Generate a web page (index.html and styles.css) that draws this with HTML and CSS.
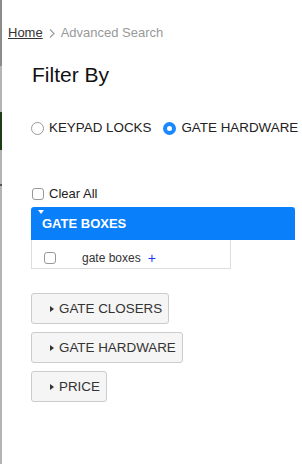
FILE: index.html
```html
<!DOCTYPE html>
<html lang="en">

<head>
    <meta charset="UTF-8">
    <meta name="viewport" content="width=device-width, initial-scale=1.0">
    <title>Advanced Search</title>
    <link rel="stylesheet" href="styles.css">
</head>
<body>

    <div class="page">
        <div class="rail">
            <span class="rail-top"></span>
            <span class="rail-light" style="height: 46px"></span>
            <span class="rail-green"></span>
            <span class="rail-light" style="height: 34px"></span>
            <span class="rail-mark"></span>
            <span class="rail-light rail-rest"></span>
        </div>

        <div class="main">
            <div class="breadcrumb">
                <a href="#" class="crumb-home">Home</a>
                <svg class="crumb-sep" width="6" height="9" viewBox="0 0 6 9"><polyline points="1,0.5 5,4.5 1,8.5" fill="none" stroke="#999" stroke-width="1.1"/></svg>
                <span class="crumb-current">Advanced Search</span>
            </div>

            <div class="filters">
                <h1 class="filter-title">Filter By</h1>

                <div class="radio-row">
                    <label class="radio"><span class="radio-dot"></span>KEYPAD LOCKS</label>
                    <label class="radio checked"><span class="radio-dot"></span>GATE HARDWARE</label>
                </div>

                <label class="clear-all"><span class="check"></span>Clear All</label>

                <div class="group-open">
                    <span class="caret-down"></span>
                    GATE BOXES
                </div>
                <div class="group-body">
                    <label class="option"><span class="check"></span><span class="option-name">gate boxes</span><span class="plus">+</span></label>
                </div>

                <div class="group-list">
                    <button class="group-btn"><span class="caret-right"></span>GATE CLOSERS</button>
                    <button class="group-btn"><span class="caret-right"></span>GATE HARDWARE</button>
                    <button class="group-btn"><span class="caret-right"></span>PRICE</button>
                </div>
            </div>
        </div>
    </div>

</body>

</html>
```

FILE: styles.css
```css
html,
body {
    margin: 0;
    background-color: #fff;
    overflow: hidden;
}

body {
    font-family: 'Liberation Sans', Arial, sans-serif;
    color: #333;
    width: 302px;
    height: 464px;
}

.page {
    display: flex;
    height: 464px;
}

.rail {
    display: flex;
    flex-direction: column;
    width: 2px;
    flex-shrink: 0;
}

.rail span {
    display: block;
    width: 2px;
}

.rail-top {
    height: 66px;
    background-color: #8c8c8c;
}

.rail-light {
    background-color: #b4b4b4;
}

.rail-green {
    height: 38px;
    background-color: #1e3d12;
}

.rail-mark {
    height: 2px;
    background-color: #555;
}

.rail-rest {
    flex: 1;
}

.main {
    flex: 1;
    min-width: 0;
    white-space: nowrap;
}

.breadcrumb {
    display: flex;
    align-items: center;
    margin-top: 25px;
    padding-left: 6px;
    font-size: 13px;
    line-height: 16px;
}

.crumb-home {
    color: #333;
    text-decoration: underline;
}

.crumb-sep {
    margin: 0 6px 0 6px;
}

.crumb-current {
    color: #999;
}

.filters {
    padding-left: 29px;
}

.filter-title {
    margin: 22px 0 0 1px;
    font-size: 21px;
    line-height: 24px;
    font-weight: normal;
    color: #111;
}

.radio-row {
    display: flex;
    margin-top: 33px;
    font-size: 13.4px;
    line-height: 16px;
    color: #222;
}

.radio {
    display: flex;
    align-items: center;
    margin-right: 12px;
}

.radio-dot {
    box-sizing: border-box;
    width: 13px;
    height: 13px;
    border: 1px solid #999;
    border-radius: 50%;
    margin-right: 5px;
    background-color: #fff;
}

.radio.checked .radio-dot {
    border: 4.5px solid #1a88ff;
    background-color: #fff;
}

.clear-all {
    display: flex;
    align-items: center;
    margin-top: 50px;
    margin-left: 1px;
    font-size: 13px;
    line-height: 16px;
    color: #222;
}

.check {
    box-sizing: border-box;
    display: inline-block;
    width: 12px;
    height: 12px;
    border: 1px solid #999;
    border-radius: 3px;
    background-color: #fff;
    margin-right: 5px;
}

.group-open {
    position: relative;
    width: 264px;
    box-sizing: border-box;
    margin-top: 5px;
    padding: 9px 11px 8px;
    font-size: 13px;
    line-height: 16px;
    font-weight: bold;
    color: #fff;
    background-color: #0a7ffa;
    border-radius: 3px 3px 0 0;
}

.caret-down {
    position: absolute;
    left: 7px;
    top: 3px;
    width: 0;
    height: 0;
    border-left: 3.5px solid transparent;
    border-right: 3.5px solid transparent;
    border-top: 4px solid #fff;
}

.group-body {
    width: 200px;
    box-sizing: border-box;
    padding: 11px 0 3px 12px;
    border: 1px solid #ddd;
    border-top: none;
}

.option {
    display: flex;
    align-items: center;
    height: 14px;
    font-size: 12px;
    color: #333;
}

.option .check {
    margin-right: 26px;
}

.plus {
    color: #1a3bff;
    font-size: 14px;
    margin-left: 7px;
}

.group-list {
    display: flex;
    flex-direction: column;
    align-items: flex-start;
    gap: 8px;
    margin-top: 24px;
}

.group-btn {
    display: flex;
    align-items: center;
    height: 31px;
    padding: 0 6px 0 18px;
    font-family: 'Liberation Sans', Arial, sans-serif;
    font-size: 13.4px;
    color: #333;
    background-color: #f5f5f5;
    border: 1px solid #ccc;
    border-radius: 3px;
    cursor: pointer;
}

.caret-right {
    width: 0;
    height: 0;
    border-top: 3.5px solid transparent;
    border-bottom: 3.5px solid transparent;
    border-left: 4px solid #333;
    margin-right: 5px;
}
```
